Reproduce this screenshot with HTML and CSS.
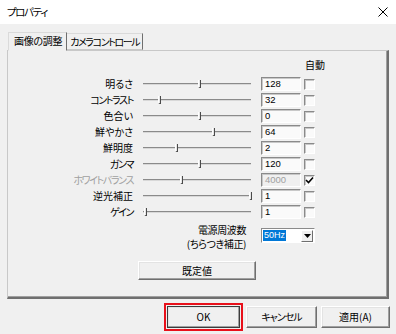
FILE: index.html
```html
<!DOCTYPE html>
<html lang="ja">
<head>
    <meta charset="UTF-8">
    <title>プロパティ</title>
    <link rel="stylesheet" href="styles.css">
</head>
<body>
    <div class="window">
        <div class="titlebar">
            <span class="title kana">プロパティ</span>
            <svg class="close" width="10" height="10" viewBox="0 0 10 10">
                <path d="M0.5 0.5 L9.5 9.5 M9.5 0.5 L0.5 9.5" stroke="#000" stroke-width="1" fill="none"/>
            </svg>
        </div>

        <div class="tabs">
            <div class="tab active">画像の調整</div>
            <div class="tab kana">カメラコントロール</div>
        </div>

        <div class="panel">
            <div class="grid">
                <div class="head"></div>
                <div class="head"></div>
                <div class="head"></div>
                <div class="head auto">自動</div>

                <div class="label">明るさ</div>
                <div class="slider"><div class="track"></div><div class="thumb" style="left: 55px"></div></div>
                <div class="cell"><div class="textbox">128</div></div>
                <div class="cell check"><div class="checkbox"></div></div>

                <div class="label kana">コントラスト</div>
                <div class="slider"><div class="track"></div><div class="thumb" style="left: 15px"></div></div>
                <div class="cell"><div class="textbox">32</div></div>
                <div class="cell check"><div class="checkbox"></div></div>

                <div class="label">色合い</div>
                <div class="slider"><div class="track"></div><div class="thumb" style="left: 55px"></div></div>
                <div class="cell"><div class="textbox">0</div></div>
                <div class="cell check"><div class="checkbox"></div></div>

                <div class="label">鮮やかさ</div>
                <div class="slider"><div class="track"></div><div class="thumb" style="left: 69px"></div></div>
                <div class="cell"><div class="textbox">64</div></div>
                <div class="cell check"><div class="checkbox"></div></div>

                <div class="label">鮮明度</div>
                <div class="slider"><div class="track"></div><div class="thumb" style="left: 32px"></div></div>
                <div class="cell"><div class="textbox">2</div></div>
                <div class="cell check"><div class="checkbox"></div></div>

                <div class="label kana">ガンマ</div>
                <div class="slider"><div class="track"></div><div class="thumb" style="left: 55px"></div></div>
                <div class="cell"><div class="textbox">120</div></div>
                <div class="cell check"><div class="checkbox"></div></div>

                <div class="label kana disabled">ホワイトバランス</div>
                <div class="slider"><div class="track"></div><div class="thumb" style="left: 37px"></div></div>
                <div class="cell"><div class="textbox disabled">4000</div></div>
                <div class="cell check">
                    <div class="checkbox">
                        <svg width="9" height="9" viewBox="0 0 9 9">
                            <path d="M1 4 L3.5 6.5 L8 1.5" stroke="#000" stroke-width="1.6" fill="none"/>
                        </svg>
                    </div>
                </div>

                <div class="label">逆光補正</div>
                <div class="slider"><div class="track"></div><div class="thumb" style="left: 106px"></div></div>
                <div class="cell"><div class="textbox">1</div></div>
                <div class="cell check"><div class="checkbox"></div></div>

                <div class="label kana">ゲイン</div>
                <div class="slider"><div class="track"></div><div class="thumb" style="left: 1px"></div></div>
                <div class="cell"><div class="textbox">1</div></div>
                <div class="cell check"><div class="checkbox"></div></div>
            </div>

            <div class="freq">
                <div class="freq-label">電源周波数<br>(ちらつき補正)</div>
                <div class="dropdown">
                    <span class="selected">50Hz</span>
                    <span class="arrow">
                        <svg width="7" height="4" viewBox="0 0 7 4"><path d="M0 0 H7 L3.5 4 Z" fill="#000"/></svg>
                    </span>
                </div>
            </div>

            <div class="reset-row">
                <button class="btn reset">既定値</button>
            </div>
        </div>

        <div class="buttons">
            <button class="btn ok">OK</button>
            <button class="btn cancel kana">キャンセル</button>
            <button class="btn apply">適用(A)</button>
        </div>
    </div>
</body>
</html>
```

FILE: styles.css
```css
* {
    box-sizing: border-box;
}
body {
    margin: 0;
    background-color: #f0f0f0;
    font-family: "Noto Sans CJK JP", "Liberation Sans", sans-serif;
    font-size: 10px;
    font-feature-settings: "palt";
    color: #000;
}
.window {
    width: 396px;
    height: 334px;
    background-color: #f0f0f0;
    overflow: hidden;
}
.kana {
    letter-spacing: -1.4px;
}
.titlebar {
    height: 24px;
    background-color: #fff;
    display: flex;
    align-items: center;
    justify-content: space-between;
    padding: 0 8px 0 7px;
}
.title {
    font-size: 10.5px;
    line-height: 24px;
}
.close {
    display: block;
}
.tabs {
    display: flex;
    margin-top: 8px;
    padding-left: 8px;
    height: 18px;
    position: relative;
    z-index: 1;
}
.tab {
    height: 18px;
    line-height: 16px;
    border-top: 1px solid #dadada;
    border-left: 1px solid #dadada;
    border-right: 1px solid #6f6f6f;
    border-bottom: 1px solid #c8c8c8;
    background-color: #f0f0f0;
    white-space: nowrap;
}
.tab.active {
    border-bottom: 1px solid #f0f0f0;
    height: 19px;
    padding: 0 4px 0 5px;
    letter-spacing: -0.3px;
}
.tab + .tab {
    border-left: none;
    margin-top: 1px;
    height: 17px;
    line-height: 15px;
    padding: 0 3px 0 3px;
}
.panel {
    margin: 0 7px;
    height: 249px;
    border-top: 1px solid #c8c8c8;
    border-left: 1px solid #c8c8c8;
    border-right: 2px solid #6f6f6f;
    border-bottom: 2px solid #6f6f6f;
    box-shadow: inset -1px -1px 0 #a0a0a0;
    padding-top: 7px;
}
.grid {
    display: grid;
    grid-template-columns: 125px 128px 40px 30px;
    grid-template-rows: 18px repeat(9, 16px);
}
.head {
    line-height: 14px;
}
.auto {
    padding-left: 4px;
}
.label {
    text-align: right;
    line-height: 16px;
    white-space: nowrap;
}
.disabled {
    color: #a0a0a0;
}
.slider {
    position: relative;
    margin: 0 10px;
}
.track {
    position: absolute;
    left: 0;
    right: 0;
    top: 7px;
    height: 2px;
    border-top: 1px solid #8a8a8a;
    border-bottom: 1px solid #d8d8d8;
}
.thumb {
    position: absolute;
    top: 4px;
    width: 3px;
    height: 8px;
    background-color: #e6e6e6;
    border-left: 1px solid #fff;
    border-right: 1px solid #4a4a4a;
    border-bottom: 1px solid #4a4a4a;
    border-bottom-left-radius: 2px;
}
.cell {
    display: flex;
    align-items: center;
}
.check {
    padding-left: 3px;
}
.textbox {
    width: 40px;
    height: 14px;
    background-color: #fafafa;
    border-top: 1px solid #8a8a8a;
    border-left: 1px solid #8a8a8a;
    border-right: 1px solid #fff;
    border-bottom: 1px solid #fff;
    box-shadow: inset 1px 1px 0 #c8c8c8;
    font-family: "Liberation Sans", sans-serif;
    font-size: 9.5px;
    line-height: 12px;
    padding-left: 3px;
}
.textbox.disabled {
    color: #a0a0a0;
    background-color: #f0f0f0;
}
.checkbox {
    width: 11px;
    height: 11px;
    background-color: #fafafa;
    border-top: 1px solid #8a8a8a;
    border-left: 1px solid #8a8a8a;
    border-right: 1px solid #fff;
    border-bottom: 1px solid #fff;
    box-shadow: inset 1px 1px 0 #c8c8c8;
    display: flex;
    align-items: center;
    justify-content: center;
}
.freq {
    display: flex;
    margin-top: 3px;
}
.freq-label {
    width: 238px;
    text-align: right;
    line-height: 14px;
    letter-spacing: -0.4px;
}
.dropdown {
    margin-left: 15px;
    margin-top: 5px;
    width: 54px;
    height: 15px;
    background-color: #fff;
    border-top: 1px solid #8a8a8a;
    border-left: 1px solid #8a8a8a;
    border-right: 1px solid #fff;
    border-bottom: 1px solid #fff;
    display: flex;
    align-items: center;
    justify-content: space-between;
    padding: 0 1px 0 1px;
}
.selected {
    background-color: #0078d7;
    color: #fff;
    font-family: "Liberation Sans", sans-serif;
    font-size: 9px;
    line-height: 11px;
    padding: 0 1px;
    white-space: nowrap;
}
.arrow {
    width: 12px;
    height: 12px;
    background-color: #f0f0f0;
    border-top: 1px solid #fff;
    border-left: 1px solid #fff;
    border-right: 1px solid #6f6f6f;
    border-bottom: 1px solid #6f6f6f;
    display: flex;
    align-items: center;
    justify-content: center;
}
.arrow svg {
    display: block;
}
.reset-row {
    margin-top: 10px;
    padding-left: 130px;
}
.btn {
    font-family: "Noto Sans CJK JP", "Liberation Sans", sans-serif;
    font-size: 10px;
    font-feature-settings: "palt";
    background-color: #f0f0f0;
    color: #000;
    border-top: 1px solid #fff;
    border-left: 1px solid #fff;
    border-right: 1px solid #6f6f6f;
    border-bottom: 1px solid #6f6f6f;
    box-shadow: inset -1px -1px 0 #a0a0a0, inset 1px 1px 0 #e3e3e3;
    padding: 0;
    line-height: 16px;
}
.btn.kana {
    letter-spacing: -1px;
}
.reset {
    width: 118px;
    height: 19px;
}
.buttons {
    display: flex;
    margin-top: 7px;
    padding-left: 167px;
}
.buttons .btn {
    height: 22px;
}
.ok {
    width: 73px;
    outline: 2px solid #e8101a;
    outline-offset: 1px;
    border: 1px solid #3c3c3c;
}
.cancel {
    width: 71px;
    margin-left: 6px;
}
.apply {
    width: 69px;
    margin-left: 4px;
}
```
